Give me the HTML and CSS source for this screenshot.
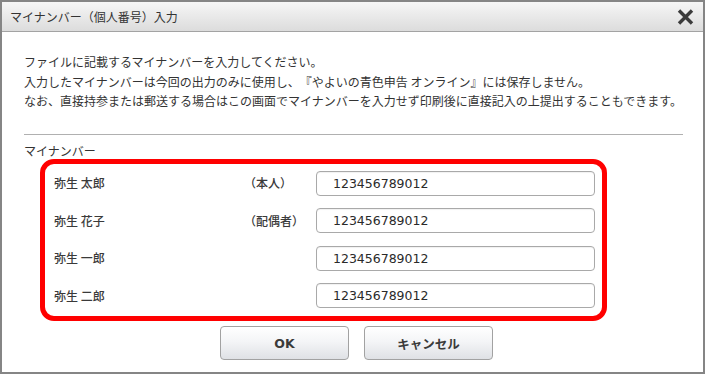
FILE: index.html
```html
<!DOCTYPE html>
<html lang="ja">
<head>
<meta charset="utf-8">
<title>マイナンバー（個人番号）入力</title>
<link rel="stylesheet" href="styles.css">
</head>
<body>
<div class="window">
  <div class="titlebar">
    <span class="title">マイナンバー（個人番号）入力</span>
    <svg class="close" width="17" height="16" viewBox="0 0 17 16" aria-label="閉じる">
      <path d="M2 1.5 L15 14.5 M15 1.5 L2 14.5" stroke="#3b3b3b" stroke-width="3.4" stroke-linecap="butt" fill="none"/>
    </svg>
  </div>
  <div class="content">
    <div class="intro">
      <p>ファイルに記載するマイナンバーを入力してください。</p>
      <p>入力したマイナンバーは今回の出力のみに使用し、『やよいの青色申告 オンライン』には保存しません。</p>
      <p>なお、直接持参または郵送する場合はこの画面でマイナンバーを入力せず印刷後に直接記入の上提出することもできます。</p>
    </div>
    <div class="rule"></div>
    <div class="section-label">マイナンバー</div>
    <div class="redbox">
      <div class="grid">
        <div class="name">弥生 太郎</div><div class="rel">（本人）</div><div class="field">123456789012</div>
        <div class="name">弥生 花子</div><div class="rel">（配偶者）</div><div class="field">123456789012</div>
        <div class="name">弥生 一郎</div><div class="rel"></div><div class="field">123456789012</div>
        <div class="name">弥生 二郎</div><div class="rel"></div><div class="field">123456789012</div>
      </div>
    </div>
    <div class="buttons">
      <button class="btn">OK</button>
      <button class="btn">キャンセル</button>
    </div>
  </div>
</div>
</body>
</html>
```

FILE: styles.css
```css
html, body {
  margin: 0;
  padding: 0;
  background: #ffffff;
}
body {
  font-family: "Noto Sans CJK JP", "Noto Sans", sans-serif;
  color: #333333;
  text-spacing-trim: space-all;
}
.window {
  box-sizing: border-box;
  width: 705px;
  height: 374px;
  border: 2px solid #858585;
  background: #ffffff;
}
.titlebar {
  box-sizing: border-box;
  height: 30px;
  border-bottom: 1px solid #a3a3a3;
  background: linear-gradient(#f6f6f6, #e9e9e9 50%, #dcdcdc);
  display: flex;
  align-items: center;
  justify-content: space-between;
  padding: 0 9px 0 8px;
}
.title {
  font-size: 12px;
  line-height: 16px;
  color: #333333;
}
.close {
  display: block;
  margin-top: 1px;
}
.content {
  padding: 20px 20px 0 22px;
}
.intro p {
  margin: 0;
  font-size: 12px;
  line-height: 19.5px;
  color: #333333;
  white-space: nowrap;
}
.rule {
  margin-top: 23px;
  height: 1px;
  width: 659px;
  background: #b0b0b0;
}
.section-label {
  margin-top: 8px;
  font-size: 12px;
  line-height: 16px;
  color: #333333;
}
.redbox {
  box-sizing: border-box;
  margin-left: 16px;
  width: 567px;
  border: 5px solid #ff0000;
  border-radius: 14px;
  padding: 7px 7px 8px 9px;
}
.grid {
  display: grid;
  grid-template-columns: 194px 68px 279px;
  row-gap: 12.6px;
  align-items: center;
}
.name, .rel {
  font-size: 12px;
  line-height: 16px;
  font-weight: 500;
  color: #3a3a3a;
  white-space: nowrap;
}
.rel {
  margin-left: -4px;
}
.field {
  box-sizing: border-box;
  height: 25px;
  border: 1px solid #a9a9a9;
  border-radius: 4px;
  padding-left: 16px;
  font-family: "DejaVu Sans", "Noto Sans", sans-serif;
  font-size: 12.5px;
  line-height: 23px;
  color: #2a2a2a;
  background: #ffffff;
  box-shadow: inset 0 1px 1px rgba(0,0,0,0.06);
}
.buttons {
  display: flex;
  gap: 15px;
  margin-top: 5px;
  padding-left: 196px;
}
.btn {
  box-sizing: border-box;
  width: 129px;
  height: 34px;
  border: 1px solid #a2a2a2;
  border-radius: 4px;
  background: linear-gradient(#ffffff, #f4f5f7 45%, #dfe1e5);
  font-family: "DejaVu Sans", "Noto Sans CJK JP", sans-serif;
  font-size: 12.5px;
  font-weight: bold;
  color: #3a3a3a;
  padding: 0;
}
```
